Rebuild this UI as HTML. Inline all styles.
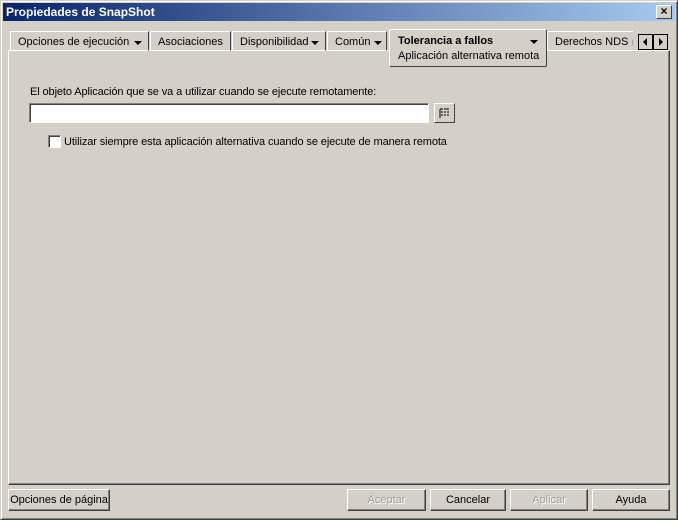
<!DOCTYPE html><html><head><style>
*{box-sizing:border-box;margin:0;padding:0}
body{width:678px;height:520px;background:#d4d0c8;font-family:"Liberation Sans",sans-serif;font-size:11px;color:#000;position:relative;overflow:hidden;white-space:nowrap}
.win{position:absolute;left:0;top:0;width:678px;height:520px;border:1px solid;border-color:#d4d0c8 #404040 #404040 #d4d0c8;box-shadow:inset 1px 1px #fff,inset -1px -1px #808080}
.title{position:absolute;left:3px;top:3px;width:672px;height:18px;background:linear-gradient(90deg,#0a246a,#a6caf0);color:#fff;font-weight:bold;font-size:12px;line-height:18px;padding-left:3px}
.close{position:absolute;left:656px;top:5px;width:16px;height:14px;background:#d4d0c8;border:1px solid;border-color:#fff #404040 #404040 #fff;font-size:12px;line-height:11px;text-align:center;color:#000;font-weight:bold}
.abs{position:absolute}
.tab{position:absolute;top:31px;height:20px;border:1px solid;border-color:#fff #404040 transparent #fff;line-height:20px;padding-left:7px;font-size:11px}
.arr{display:inline-block;width:0;height:0;border-left:4px solid transparent;border-right:4px solid transparent;border-top:4px solid #000;position:absolute;top:9px}
.panel{position:absolute;left:8px;top:50px;width:662px;height:435px;border:1px solid;border-color:#fff #404040 #404040 #fff;box-shadow:inset -1px -1px #808080}
.btn{position:absolute;top:489px;height:22px;border:1px solid;border-color:#fff #404040 #404040 #fff;box-shadow:inset -1px -1px #808080;text-align:center;line-height:20px}
.dis{color:#a0a0a0;text-shadow:1px 1px #fff}
.n{letter-spacing:-0.1px}
</style></head><body>
<div class="win"></div>
<div class="title">Propiedades de SnapShot</div>
<div class="close">×</div>
<div class="panel"></div>
<div class="tab" style="left:10px;width:139px">Opciones de ejecución<span class="arr" style="left:123px"></span></div>
<div class="tab" style="left:150px;width:81px">Asociaciones</div>
<div class="tab" style="left:232px;width:94px">Disponibilidad<span class="arr" style="left:78px"></span></div>
<div class="tab" style="left:327px;width:60px">Común<span class="arr" style="left:46px"></span></div>
<div class="tab" style="left:547px;width:86px;border-right:none;overflow:hidden">Derechos NDS <span style="color:#999">(</span></div>
<div class="abs" style="left:389px;top:29px;width:158px;height:38px;background:#d4d0c8;border:1px solid;border-color:#fff #404040 #404040 #fff;border-radius:2px;padding-left:8px;line-height:15px;padding-top:4px">
<b>Tolerancia a fallos</b><span class="arr" style="left:140px;top:10px"></span><br>Aplicación alternativa remota</div>
<div class="abs" style="left:638px;top:34px;width:15px;height:16px;border:1px solid #000;background:#d4d0c8"><span class="abs" style="left:4px;top:3px;border-top:4px solid transparent;border-bottom:4px solid transparent;border-right:4px solid #000"></span></div>
<div class="abs" style="left:653px;top:34px;width:15px;height:16px;border:1px solid #000;background:#d4d0c8"><span class="abs" style="left:5px;top:3px;border-top:4px solid transparent;border-bottom:4px solid transparent;border-left:4px solid #000"></span></div>
<div class="abs n" style="left:30px;top:86px">El objeto Aplicación que se va a utilizar cuando se ejecute remotamente:</div>
<div class="abs" style="left:29px;top:103px;width:400px;height:20px;background:#fff;border:1px solid;border-color:#808080 #fff #fff #808080;box-shadow:inset 1px 1px #404040"></div>
<div class="abs" style="left:434px;top:103px;width:21px;height:20px;border:1px solid;border-color:#fff #404040 #404040 #fff">
<svg width="19" height="18" class="abs" style="left:0;top:0"><path d="M5 5h3M5 5v9M6 8h2M6 11h2M9 5h5M9 8h2M12 8h2M9 11h2M12 11h2" stroke="#000" fill="none"/></svg></div>
<div class="abs" style="left:48px;top:135px;width:13px;height:13px;background:#fff;border:1px solid;border-color:#808080 #fff #fff #808080;box-shadow:inset 1px 1px #404040"></div>
<div class="abs n" style="left:64px;top:136px">Utilizar siempre esta aplicación alternativa cuando se ejecute de manera remota</div>
<div class="btn" style="left:8px;width:102px">Opciones de página</div>
<div class="btn dis" style="left:347px;width:79px">Aceptar</div>
<div class="btn" style="left:430px;width:76px">Cancelar</div>
<div class="btn dis" style="left:510px;width:78px">Aplicar</div>
<div class="btn" style="left:592px;width:78px">Ayuda</div>
</body></html>
